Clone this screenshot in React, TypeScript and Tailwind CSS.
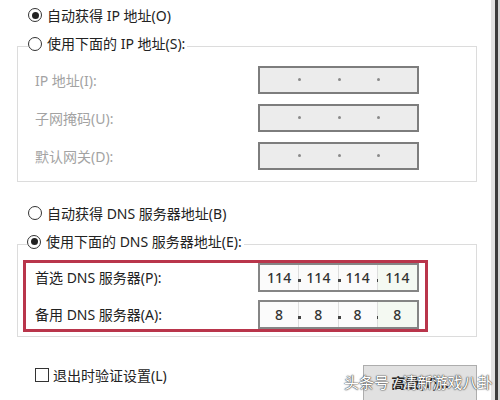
import React from 'react'

const font = { fontFamily: '"Noto Sans", "Noto Sans CJK SC", sans-serif' }

function Radio({ checked }: { checked?: boolean }) {
  return (
    <span className="flex h-[14px] w-[14px] shrink-0 items-center justify-center rounded-full border border-[#333] bg-white">
      {checked && <span className="h-[7px] w-[7px] rounded-full bg-[#222]" />}
    </span>
  )
}

function EmptyIp() {
  return (
    <div className="grid h-[28px] w-[161px] grid-cols-4 border-2 border-[#7d7d7d] bg-[#ececec]">
      {[0, 1, 2, 3].map((i) => (
        <div key={i} className="relative">
          {i < 3 && <span className="absolute right-[-2px] top-[10px] h-[3px] w-[3px] rounded-full bg-[#8a8a8a]" />}
        </div>
      ))}
    </div>
  )
}

function FilledIp({ parts }: { parts: string[] }) {
  return (
    <div className="grid h-[29px] w-[161px] grid-cols-4 border-2 border-[#858585] bg-[#fbfbfb]">
      {parts.map((p, i) => (
        <div
          key={i}
          className={`relative flex items-center justify-center text-[14px] font-medium text-[#333] ${i < 3 ? 'border-r border-[#dedede]' : ''} ${i === 3 ? 'bg-[#f4f9f2]' : ''}`}
        >
          {p}
          {i < 3 && <span className="absolute right-[-3px] top-[14px] h-[3px] w-[3px] bg-[#444]" />}
        </div>
      ))}
    </div>
  )
}

export default function App() {
  return (
    <div className="relative flex h-[400px] w-[500px] overflow-hidden bg-white text-[14px] text-[#222]" style={font}>
      <div className="flex-1 pl-[17px] pr-[14px] pt-[5px]">
        {/* IP 部分 */}
        <div className="flex h-[20px] items-center gap-[5px] pl-[11px]">
          <Radio checked />
          <span>自动获得 IP 地址(O)</span>
        </div>

        <fieldset className="mt-[10px] border border-[#dcdcdc] px-[17px] pb-[11px] pt-[9px]">
          <legend className="-ml-[7px] flex h-[22px] items-center gap-[5px] pb-[5px] pr-[2px]">
            <Radio />
            <span>使用下面的 IP 地址(S):</span>
          </legend>
          <div className="flex flex-col gap-[10px] text-[#a3a3a3]">
            {['IP 地址(I):', '子网掩码(U):', '默认网关(D):'].map((l) => (
              <div key={l} className="flex items-center justify-between pr-[40px]">
                <span>{l}</span>
                <EmptyIp />
              </div>
            ))}
          </div>
        </fieldset>

        {/* DNS 部分 */}
        <div className="mt-[21px] flex h-[20px] items-center gap-[5px] pl-[11px]">
          <Radio />
          <span>自动获得 DNS 服务器地址(B)</span>
        </div>

        <fieldset className="mt-[10px] border border-[#dcdcdc] pb-[4px] pl-[5px] pr-[48px] pt-[0px]">
          <legend className="ml-[4px] flex h-[22px] items-center gap-[5px] pb-[5px] pr-[2px]">
            <Radio checked />
            <span>使用下面的 DNS 服务器地址(E):</span>
          </legend>
          <div className="mt-[5px] flex flex-col gap-[8px] border-[3px] border-[#b9354b] pl-[9px] pr-[6px]">
            <div className="flex items-center justify-between">
              <span>首选 DNS 服务器(P):</span>
              <FilledIp parts={['114', '114', '114', '114']} />
            </div>
            <div className="flex items-center justify-between">
              <span>备用 DNS 服务器(A):</span>
              <FilledIp parts={['8', '8', '8', '8']} />
            </div>
          </div>
        </fieldset>

        <div className="mt-[28px] flex items-start justify-between">
          <div className="flex h-[20px] items-center gap-[4px] pl-[18px]">
            <span className="h-[14px] w-[14px] border border-[#333] bg-white" />
            <span>退出时验证设置(L)</span>
          </div>
          <div className="flex h-[40px] w-[114px] justify-center border border-[#adadad] bg-[#e1e1e1] pt-[6px] font-semibold">
            高级(V)...
          </div>
        </div>
      </div>

      {/* 右侧窗口边 */}
      <div className="w-[4px] bg-[#e2e2e2]" />
      <div className="w-[3px] bg-[#3c3c3c]" />
      <div className="w-[2px] bg-[#d4d4d4]" />

      {/* 水印 */}
      <div className="absolute left-[344px] top-[371px] whitespace-nowrap text-[15px] text-white [text-shadow:0_0_1px_#444,0_0_1px_#444,0_0_2px_#666]">
        头条号 / 清新游戏八卦
      </div>
    </div>
  )
}
